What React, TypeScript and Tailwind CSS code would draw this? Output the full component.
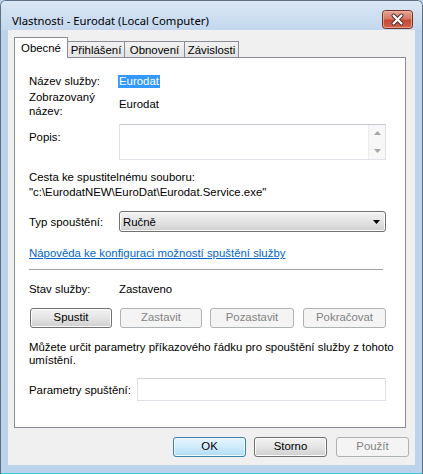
import React from "react";

const ui = { fontFamily: '"Liberation Sans", Arial, sans-serif' };

function Btn({ children, w, disabled, def }: { children: React.ReactNode; w: string; disabled?: boolean; def?: boolean }) {
  const base = "h-[20px] rounded-[3px] border flex items-center justify-center text-[11.4px] leading-none";
  let cls = "";
  if (disabled) cls = "border-[#adb2b5] bg-[#f4f4f4] text-[#838383]";
  else if (def)
    cls = "border-[#3c7fb1] text-black bg-[#cbeafb] bg-linear-to-b from-[#e5f4fc] via-[#cfeafa] to-[#aedcf5] shadow-[inset_0_0_0_1px_#f0faff]";
  else
    cls = "border-[#707070] text-black bg-[#e2e2e2] bg-linear-to-b from-[#f2f2f2] via-[#e4e4e4] to-[#cfcfcf] shadow-[inset_0_0_0_1px_#fcfcfc]";
  return <div className={`${base} ${cls} ${w}`}>{children}</div>;
}

function Tab({ label, w, selected }: { label: string; w: string; selected?: boolean }) {
  if (selected)
    return (
      <div className={`${w} h-[21px] -mb-px relative z-10 bg-white border border-b-0 border-[#898c95] flex items-start justify-center pt-[3px] text-[11.4px] leading-[14px]`}>
        {label}
      </div>
    );
  return (
    <div className={`${w} h-[16px] -ml-px bg-[#ebebeb] bg-linear-to-b from-[#f2f2f2] to-[#e3e3e3] border border-b-0 border-[#898c95] flex items-start justify-center pt-[1px] text-[11.4px] leading-[14px] text-black`}>
      {label}
    </div>
  );
}

function CloseButton() {
  return (
    <svg width="31" height="19" viewBox="0 0 31 19" className="mt-[9px] mr-[9px] shrink-0">
      <defs>
        <linearGradient id="cb" x1="0" y1="0" x2="0" y2="1">
          <stop offset="0" stopColor="#e8a797" />
          <stop offset="0.45" stopColor="#d57866" />
          <stop offset="0.55" stopColor="#c44a36" />
          <stop offset="1" stopColor="#d0664f" />
        </linearGradient>
      </defs>
      <rect x="0.5" y="0.5" width="30" height="18" rx="3" fill="url(#cb)" stroke="#6e3129" />
      <rect x="1.5" y="1.5" width="28" height="16" rx="2" fill="none" stroke="#f0b7a8" strokeOpacity="0.7" />
      <path d="M11.5 5.5 L19.5 13.5 M19.5 5.5 L11.5 13.5" stroke="#4a2a2a" strokeWidth="4" strokeLinecap="round" />
      <path d="M11.5 5.5 L19.5 13.5 M19.5 5.5 L11.5 13.5" stroke="#ffffff" strokeWidth="2.2" strokeLinecap="round" />
    </svg>
  );
}

export default function App() {
  return (
    <div className="w-[423px] h-[474px] bg-[#bcd3ec]">
      <div
        className="w-full h-full flex flex-col rounded-t-[6px] border border-b-0 border-[#5f6f82] bg-[#bcd3ec] overflow-hidden"
        style={ui}
      >
        {/* Title bar */}
        <div className="h-[29px] flex items-start shrink-0 bg-[#cddef1] bg-linear-to-b from-[#dbe7f4] to-[#c3d7ed]">
          <div
            className="pl-[11px] pt-[13px] text-[11.3px] leading-[14px] text-black flex-1"
            style={{ fontFamily: '"Noto Sans", "Open Sans", sans-serif' }}
          >
            Vlastnosti - Eurodat (Local Computer)
          </div>
          <CloseButton />
        </div>

        {/* Client area */}
        <div className="mx-[7px] h-[435px] bg-[#f0f0f0] flex flex-col shrink-0">
          {/* Tabs */}
          <div className="pl-[6px] pt-[7px] flex items-end h-[27px]">
            <Tab label="Obecné" w="w-[54px]" selected />
            <Tab label="Přihlášení" w="w-[58px]" />
            <Tab label="Obnovení" w="w-[61px]" />
            <Tab label="Závislosti" w="w-[55px]" />
          </div>

          {/* Panel */}
          <div className="ml-[6px] w-[392px] h-[371px] bg-white border border-[#898c95] pl-[14px] text-[11.4px] text-black flex flex-col">
            <div className="mt-[17px] h-[13px] flex items-center leading-[13px]">
              <div className="w-[90px]">Název služby:</div>
              <div className="bg-[#3399ff] text-white px-[1px] -ml-px leading-[13px]">Eurodat</div>
            </div>
            <div className="mt-[2px] h-[28px] flex items-center">
              <div className="w-[90px] leading-[14px]">
                Zobrazovaný
                <br />
                název:
              </div>
              <div className="leading-[14px]">Eurodat</div>
            </div>
            <div className="mt-[6px] h-[36px] flex items-start">
              <div className="w-[90px] pt-[6px] leading-[14px]">Popis:</div>
              <div className="w-[267px] h-[36px] border border-[#dfe3e8] border-t-[#c6c9cf] bg-white flex justify-end">
                <div className="w-[17px] h-full bg-[#f7f7f7] border-l border-[#ececec] flex flex-col items-center justify-between py-[6px]">
                  <svg width="7" height="4" viewBox="0 0 7 4">
                    <path d="M0 4 L3.5 0 L7 4 Z" fill="#a6a6a6" />
                  </svg>
                  <svg width="7" height="4" viewBox="0 0 7 4">
                    <path d="M0 0 L7 0 L3.5 4 Z" fill="#a6a6a6" />
                  </svg>
                </div>
              </div>
            </div>
            <div className="mt-[10px] leading-[15px]">Cesta ke spustitelnému souboru:</div>
            <div className="leading-[15px]">"c:\EurodatNEW\EuroDat\Eurodat.Service.exe"</div>
            <div className="mt-[11px] h-[21px] flex items-center">
              <div className="w-[90px] leading-[14px]">Typ spouštění:</div>
              <div className="w-[267px] h-[21px] rounded-[3px] border border-[#707070] bg-[#e2e2e2] bg-linear-to-b from-[#f2f2f2] via-[#e4e4e4] to-[#cfcfcf] shadow-[inset_0_0_0_1px_#fcfcfc] flex items-center pl-[3px] pr-[5px]">
                <div className="flex-1 leading-[14px]">Ručně</div>
                <svg width="7" height="4" viewBox="0 0 7 4">
                  <path d="M0 0 L7 0 L3.5 4 Z" fill="#000" />
                </svg>
              </div>
            </div>
            <div className="mt-[14px] leading-[14px] text-[#0066cc] underline underline-offset-[1px]">
              Nápověda ke konfiguraci možností spuštění služby
            </div>
            <div className="mt-[9px] w-[354px] h-px bg-[#a0a0a0]" />
            <div className="w-[354px] h-px bg-white" />
            <div className="mt-[11px] h-[14px] flex items-center leading-[14px]">
              <div className="w-[90px]">Stav služby:</div>
              <div>Zastaveno</div>
            </div>
            <div className="mt-[12px] flex pl-px">
              <Btn w="w-[82px]">Spustit</Btn>
              <div className="ml-[8px]">
                <Btn w="w-[82px]" disabled>Zastavit</Btn>
              </div>
              <div className="ml-[8px]">
                <Btn w="w-[84px]" disabled>Pozastavit</Btn>
              </div>
              <div className="ml-[9px]">
                <Btn w="w-[83px]" disabled>Pokračovat</Btn>
              </div>
            </div>
            <div className="mt-[13px] leading-[13px] whitespace-nowrap">
              Můžete určit parametry příkazového řádku pro spouštění služby z tohoto
              <br />
              umístění.
            </div>
            <div className="mt-[11px] h-[23px] flex items-center">
              <div className="w-[108px] leading-[14px]">Parametry spuštění:</div>
              <div className="w-[249px] h-[23px] border border-[#dcdfe4] border-t-[#cfd2d7] bg-white" />
            </div>
          </div>

          {/* Bottom buttons */}
          <div className="mt-[9px] flex pl-[165px]">
            <Btn w="w-[73px]" def>OK</Btn>
            <div className="ml-[8px]">
              <Btn w="w-[73px]">Storno</Btn>
            </div>
            <div className="ml-[9px]">
              <Btn w="w-[73px]" disabled>Použít</Btn>
            </div>
          </div>
        </div>
        <div className="flex-1" />
        <div className="h-px bg-[#38c4d4] shrink-0" />
      </div>
    </div>
  );
}
